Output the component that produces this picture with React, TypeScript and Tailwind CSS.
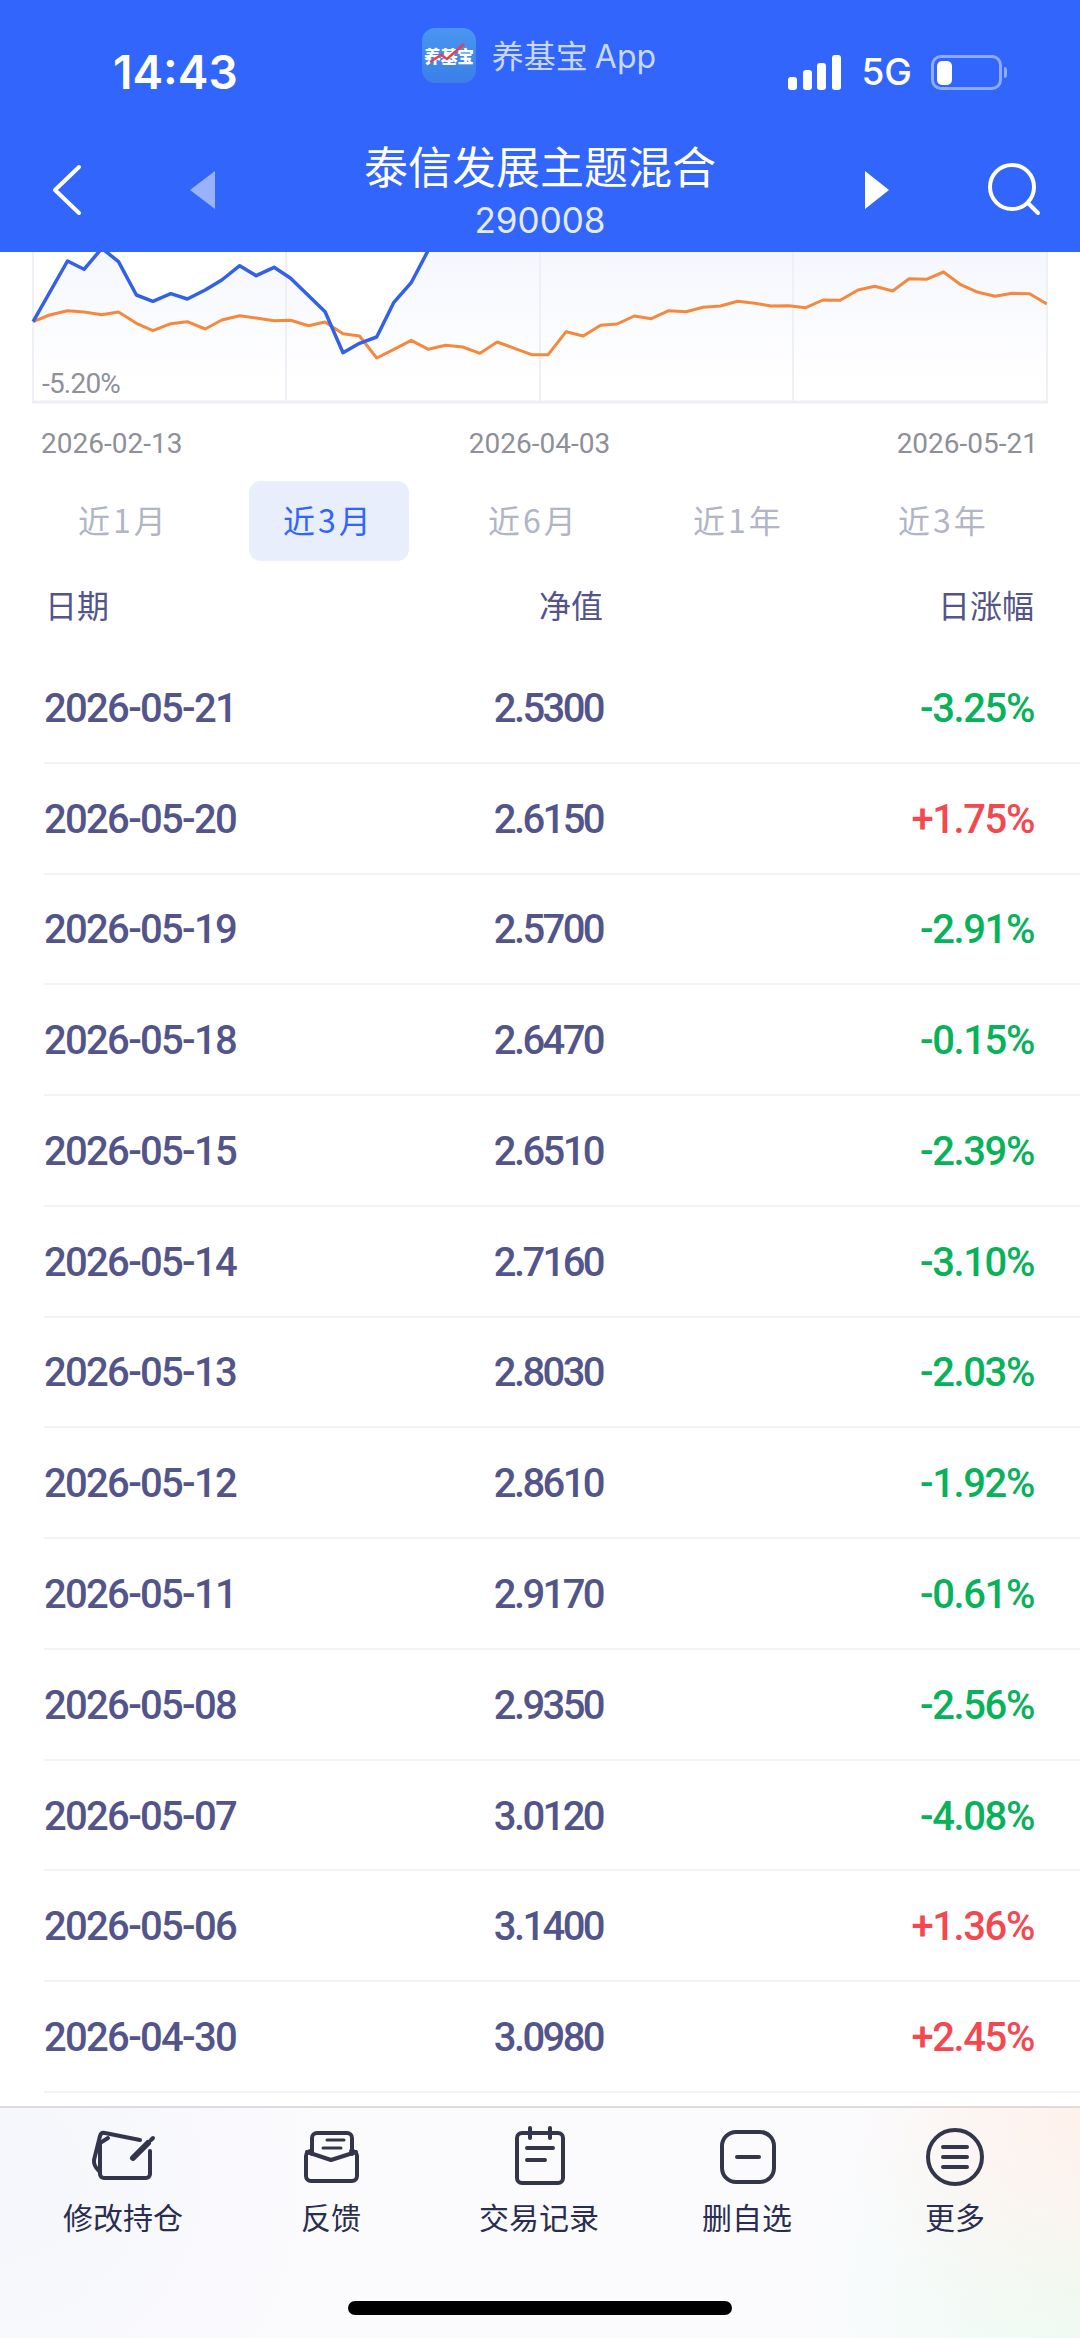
const rows = [
  ["2026-05-21", "2.5300", "-3.25%"],
  ["2026-05-20", "2.6150", "+1.75%"],
  ["2026-05-19", "2.5700", "-2.91%"],
  ["2026-05-18", "2.6470", "-0.15%"],
  ["2026-05-15", "2.6510", "-2.39%"],
  ["2026-05-14", "2.7160", "-3.10%"],
  ["2026-05-13", "2.8030", "-2.03%"],
  ["2026-05-12", "2.8610", "-1.92%"],
  ["2026-05-11", "2.9170", "-0.61%"],
  ["2026-05-08", "2.9350", "-2.56%"],
  ["2026-05-07", "3.0120", "-4.08%"],
  ["2026-05-06", "3.1400", "+1.36%"],
  ["2026-04-30", "3.0980", "+2.45%"],
];

const tabs = ["近1月", "近3月", "近6月", "近1年", "近3年"];

// traced off the reference, x is squeezed by 1.452 and y is 3x with a 240 offset
const orangeRaw = [
  [48, 245], [72, 225], [98, 212], [122, 216], [148, 224], [172, 216], [198, 250], [222, 272], [248, 251], [272, 245],
  [298, 267], [322, 240], [348, 227], [372, 234], [398, 242], [422, 241], [448, 257], [472, 246], [498, 281], [522, 288],
  [547, 354], [572, 328], [597, 301], [622, 328], [647, 316], [672, 321], [697, 340], [722, 306], [747, 325], [772, 344],
  [796, 344], [822, 275], [847, 288], [872, 256], [896, 252], [921, 228], [946, 236], [971, 212], [996, 215], [1021, 202],
  [1046, 198], [1071, 184], [1096, 190], [1120, 198], [1145, 197], [1170, 203], [1195, 180], [1220, 181], [1246, 150], [1270, 139],
  [1296, 153], [1320, 116], [1345, 118], [1370, 96], [1395, 134], [1420, 157], [1445, 169], [1470, 160], [1495, 161], [1520, 192],
];
const blueRaw = [
  [48, 245], [98, 63], [122, 88], [148, 25], [172, 65], [198, 165], [222, 184], [248, 161], [272, 177], [298, 150],
  [322, 120], [348, 77], [372, 107], [398, 82], [422, 115], [472, 215], [498, 338], [522, 310], [547, 291], [572, 187],
  [597, 128], [622, 30], [647, -60],
];

const toPath = (pts: number[][]) =>
  pts.map(([x, y], i) => `${i ? "L" : "M"}${(x / 1.452).toFixed(1)} ${(y / 3 - 12).toFixed(1)}`).join(" ");

const numFont = "font-['Roboto',sans-serif]";

function Chart() {
  const blue = toPath(blueRaw);
  return (
    <div className="relative h-[152px] w-full">
      <svg width="1080" height="152" viewBox="0 0 1080 152" className="block">
        <defs>
          <linearGradient id="area" x1="0" y1="0" x2="0" y2="1">
            <stop offset="0" stopColor="#f3f5fd" />
            <stop offset="0.9" stopColor="#ffffff" />
          </linearGradient>
        </defs>
        <path d={`${blue} L1047 -30 L1047 150 L33 150 Z`} fill="url(#area)" />
        <path d="M33 0V150M286 0V150M540 0V150M793 0V150M1047 0V150" stroke="#eff0f6" strokeWidth="2" fill="none" />
        <path d="M32 150H1048" stroke="#eeeff4" strokeWidth="3" fill="none" />
        <path d={toPath(orangeRaw)} stroke="#f6883d" strokeWidth="3" fill="none" strokeLinejoin="round" />
        <path d={blue} stroke="#3261e8" strokeWidth="3.5" fill="none" strokeLinejoin="round" />
      </svg>
      <span className={`absolute left-[42px] top-[116px] text-[28px] leading-[32px] tracking-[-0.8px] text-[#8f909a] ${numFont}`}>-5.20%</span>
    </div>
  );
}

function Icon({ children }: { children: React.ReactNode }) {
  return (
    <svg width="70" height="64" viewBox="0 0 70 64" fill="none" stroke="#33354a" strokeWidth="4" strokeLinecap="round" strokeLinejoin="round">
      {children}
    </svg>
  );
}

const actions = [
  {
    label: "修改持仓",
    icon: (
      <>
        <path d="M12 20V50a4 4 0 0 0 4 4H58a4 4 0 0 0 4-4V27" />
        <path d="M52 16L17 9Q13 8 12 12L6 36Q5.5 42 11 47" />
        <path d="M12 19L20 14" />
        <path d="M45 34L60 19" strokeWidth="6" />
        <path d="M63 16L65 14" />
      </>
    ),
  },
  {
    label: "反馈",
    icon: (
      <>
        <path d="M16 27H15a5 5 0 0 0-5 5V52a5 5 0 0 0 5 5H56a5 5 0 0 0 5-5V32a5 5 0 0 0-5-5H55" />
        <path d="M16 30V14a5 5 0 0 1 5-5H51a5 5 0 0 1 5 5V30" />
        <path d="M11 28L35 36L60 28" />
        <path d="M31 16H48M27 24H45" strokeWidth="3" />
      </>
    ),
  },
  {
    label: "交易记录",
    icon: (
      <>
        <rect x="13" y="9" width="46" height="50" rx="5" />
        <path d="M26 4V14M46 4V14" />
        <path d="M23 24H49M23 36H41" />
      </>
    ),
  },
  {
    label: "删自选",
    icon: (
      <>
        <rect x="10" y="8" width="52" height="50" rx="14" />
        <path d="M25 33H47" />
      </>
    ),
  },
  {
    label: "更多",
    icon: (
      <>
        <circle cx="35" cy="33" r="27" />
        <path d="M23 23H47M23 33H47M23 43H47" />
      </>
    ),
  },
];

export default function App() {
  return (
    <div className="flex h-[2338px] w-[1080px] flex-col overflow-hidden bg-white font-['Noto_Sans_CJK_SC','Liberation_Sans',sans-serif]">
      <header className="h-[252px] shrink-0 bg-[#3165fb] text-white">
        <div className="flex h-[124px] items-start">
          <span className="ml-[113px] mt-[47px] font-['Inter',sans-serif] text-[46px] font-semibold leading-[50px]">14:43</span>
          <div className="ml-[184px] mt-[28px] flex items-center gap-[16px]">
            <div className="relative flex h-[55px] w-[54px] items-center justify-center overflow-hidden rounded-[13px] bg-gradient-to-b from-[#4a96f0] to-[#3a7fe8]">
              <span className="text-[17px] font-black leading-none tracking-[-0.5px] text-white">养基宝</span>
              <svg className="absolute left-0 top-0" width="54" height="55" viewBox="0 0 54 55" fill="none">
                <path d="M8 34L19 27L25 31L42 16" stroke="#e8404a" strokeWidth="2.5" />
              </svg>
            </div>
            <span className="text-[32px] leading-[40px] text-[#c8d8ff]">养基宝 <span className="font-['Inter',sans-serif]">App</span></span>
          </div>
          <div className="ml-auto mr-[73px] mt-[54px] flex items-end">
            <svg width="54" height="35" viewBox="0 0 54 35" fill="white">
              <rect x="0" y="22" width="9" height="13" rx="3" />
              <rect x="15" y="15" width="9" height="20" rx="3" />
              <rect x="29" y="8" width="9" height="27" rx="3" />
              <rect x="44" y="0" width="9" height="35" rx="3" />
            </svg>
            <span className="ml-[19px] font-['Inter',sans-serif] text-[37px] font-medium leading-[36px]">5G</span>
            <div className="ml-[19px] flex h-[35px] w-[71px] items-center rounded-[10px] border-[3px] border-[#8fabfc] px-[3px]">
              <div className="h-[24px] w-[15px] rounded-[5px] bg-white" />
            </div>
            <div className="mb-[12px] ml-[2px] h-[11px] w-[3px] rounded-r-[3px] bg-[#8fabfc]" />
          </div>
        </div>
        <div className="flex h-[128px] items-center">
          <svg className="ml-[50px] mt-[4px]" width="34" height="52" viewBox="0 0 34 52" fill="none" stroke="white" strokeWidth="4" strokeLinecap="round" strokeLinejoin="round">
            <path d="M29 3L5 26L29 49" />
          </svg>
          <svg className="ml-[106px] mt-[4px]" width="26" height="38" viewBox="0 0 26 38" fill="white" opacity="0.5">
            <path d="M25 0V38L0 19Z" />
          </svg>
          <div className="flex flex-1 flex-col items-center pt-[4px]">
            <span className="text-[44px] leading-[50px]">泰信发展主题混合</span>
            <span className="mt-[10px] font-['Inter',sans-serif] text-[35px] leading-[40px] text-[#e4ebff]">290008</span>
          </div>
          <svg className="mt-[4px]" width="26" height="38" viewBox="0 0 26 38" fill="white">
            <path d="M1 0V38L25 19Z" />
          </svg>
          <svg className="ml-[97px] mr-[37px] mt-[4px]" width="56" height="56" viewBox="0 0 56 56" fill="none" stroke="white" strokeWidth="4" strokeLinecap="round">
            <circle cx="25" cy="25" r="22" />
            <path d="M41 41L51 51" />
          </svg>
        </div>
      </header>

      <Chart />

      <div className={`mt-[25px] flex justify-between pl-[41px] pr-[42px] text-[28px] leading-[30px] text-[#8e8f99] ${numFont}`}>
        <span>2026-02-13</span>
        <span>2026-04-03</span>
        <span>2026-05-21</span>
      </div>

      <div className="ml-[21px] mt-[22px] grid w-[1025px] grid-cols-5">
        {tabs.map((t) => (
          <div key={t} className="flex h-[80px] items-center justify-center">
            <div className={`flex h-[80px] w-[160px] items-center justify-center rounded-[12px] pb-[5px] text-[32px] tracking-[3px] ${t === "近3月" ? "bg-[#e8eefc] text-[#3165fb]" : "text-[#b1b5c5]"}`}>
              {t}
            </div>
          </div>
        ))}
      </div>

      <div className="mt-[19px] flex h-[48px] items-center text-[32px] text-[#53558a]">
        <span className="ml-[45px] w-[200px]">日期</span>
        <span className="w-[358px] text-right">净值</span>
        <span className="mr-[46px] flex-1 text-right">日涨幅</span>
      </div>

      <div className="mt-[25px] flex-1">
        {rows.map(([date, nav, pct]) => (
          <div key={date} className={`ml-[44px] flex h-[110.77px] items-center border-b-2 border-[#f3f3f5] pt-[3px] text-[40px] font-medium tracking-[-1.6px] ${numFont}`}>
            <span className="w-[200px] tracking-[-1.7px] text-[#53558a]">{date}</span>
            <span className="w-[359px] text-right tracking-[-2.6px] text-[#53558a]">{nav}</span>
            <span className={`mr-[46px] flex-1 text-right tracking-[-1.4px] ${pct[0] === "+" ? "text-[#f5474f]" : "text-[#07b25a]"}`}>{pct}</span>
          </div>
        ))}
      </div>

      <footer className="relative h-[232px] shrink-0 border-t-2 border-[#dcdcdf] bg-[#fbfbfe] bg-[radial-gradient(circle_at_100%_5%,#fff1ec_0,transparent_22%),radial-gradient(circle_at_100%_85%,#ecfbf2_0,transparent_25%),radial-gradient(circle_at_0%_30%,#f5f6fb_0,transparent_30%)]">
        <div className="ml-[19px] mt-[16px] grid w-[1040px] grid-cols-5">
          {actions.map((a) => (
            <div key={a.label} className="flex flex-col items-center">
              <Icon>{a.icon}</Icon>
              <span className="mt-[7px] text-[30px] leading-[42px] text-[#2a2d4f]">{a.label}</span>
            </div>
          ))}
        </div>
        <div className="absolute bottom-[23px] left-[348px] h-[14px] w-[384px] rounded-full bg-black" />
      </footer>
    </div>
  );
}
